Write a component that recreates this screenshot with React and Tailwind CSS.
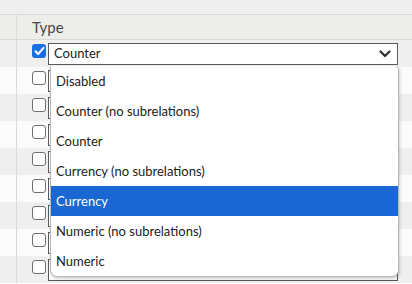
import React from "react";

const font = { fontFamily: '"Lato", "Noto Sans", sans-serif' };

const options = [
  "Disabled",
  "Counter (no subrelations)",
  "Counter",
  "Currency (no subrelations)",
  "Currency",
  "Numeric (no subrelations)",
  "Numeric",
];

function Chevron() {
  return (
    <svg width="12" height="8" viewBox="0 0 12 8" fill="none">
      <path d="M1.5 1.5 L6 6 L10.5 1.5" stroke="#2e2e2e" strokeWidth="2.2" strokeLinecap="round" strokeLinejoin="round" />
    </svg>
  );
}

function Checkbox({ checked }) {
  if (checked) {
    return (
      <div className="w-[14px] h-[14px] rounded-[3px] bg-[#1a6fe0] flex items-center justify-center">
        <svg width="11" height="10" viewBox="0 0 11 10" fill="none">
          <path d="M1.5 5.2 L4.2 8 L9.5 1.8" stroke="white" strokeWidth="2" strokeLinecap="round" strokeLinejoin="round" />
        </svg>
      </div>
    );
  }
  return <div className="w-[14px] h-[14px] rounded-[3px] border border-[#6e6e6e] bg-white" />;
}

function Row({ index }) {
  const striped = index % 2 === 0;
  return (
    <div className={`flex h-[27px] ${striped ? "bg-[#efefef]" : "bg-[#fbfbfb]"}`}>
      <div className="w-[17px] shrink-0 border-r border-[#dadada]" />
      <div className="flex items-start pl-[15px] pt-[4px] gap-[2px] flex-1">
        <Checkbox checked={index === 0} />
        <div className="-mt-[1px] w-[350px] h-[22px] border border-[#5a5a5a] bg-white flex items-center justify-between pl-[5px] pr-[6px] text-[13px] text-[#222]">
          <span>Counter</span>
          <Chevron />
        </div>
      </div>
    </div>
  );
}

export default function App() {
  return (
    <div className="relative w-[412px] h-[284px] overflow-hidden bg-white" style={font}>
      <div className="h-[15px] bg-[#efefef] border-b border-[#d8d8d6]" />
      <div className="flex h-[25px] bg-[#ededea] border-b border-[#d8d8d6]">
        <div className="w-[17px] shrink-0 border-r border-[#dadada]" />
        <div className="pl-[15px] text-[15px] text-[#4a4a4a] leading-[24px]">Type</div>
      </div>
      {Array.from({ length: 9 }).map((_, i) => (
        <Row key={i} index={i} />
      ))}

      {/* open menu of the first row's select */}
      <div className="absolute left-[50px] top-[66px] w-[349px] bg-white rounded-b-[7px] rounded-tr-[4px] border-l border-r border-b border-[#b8b8b8] shadow-[1px_2px_3px_rgba(0,0,0,0.18)] overflow-hidden">
        {options.map((o) => (
          <div
            key={o}
            className={`h-[30px] flex items-center pl-[5px] pt-[1px] text-[13px] ${o === "Currency" ? "bg-[#1a66d2] text-white" : "text-[#222]"}`}
          >
            {o}
          </div>
        ))}
      </div>
    </div>
  );
}
